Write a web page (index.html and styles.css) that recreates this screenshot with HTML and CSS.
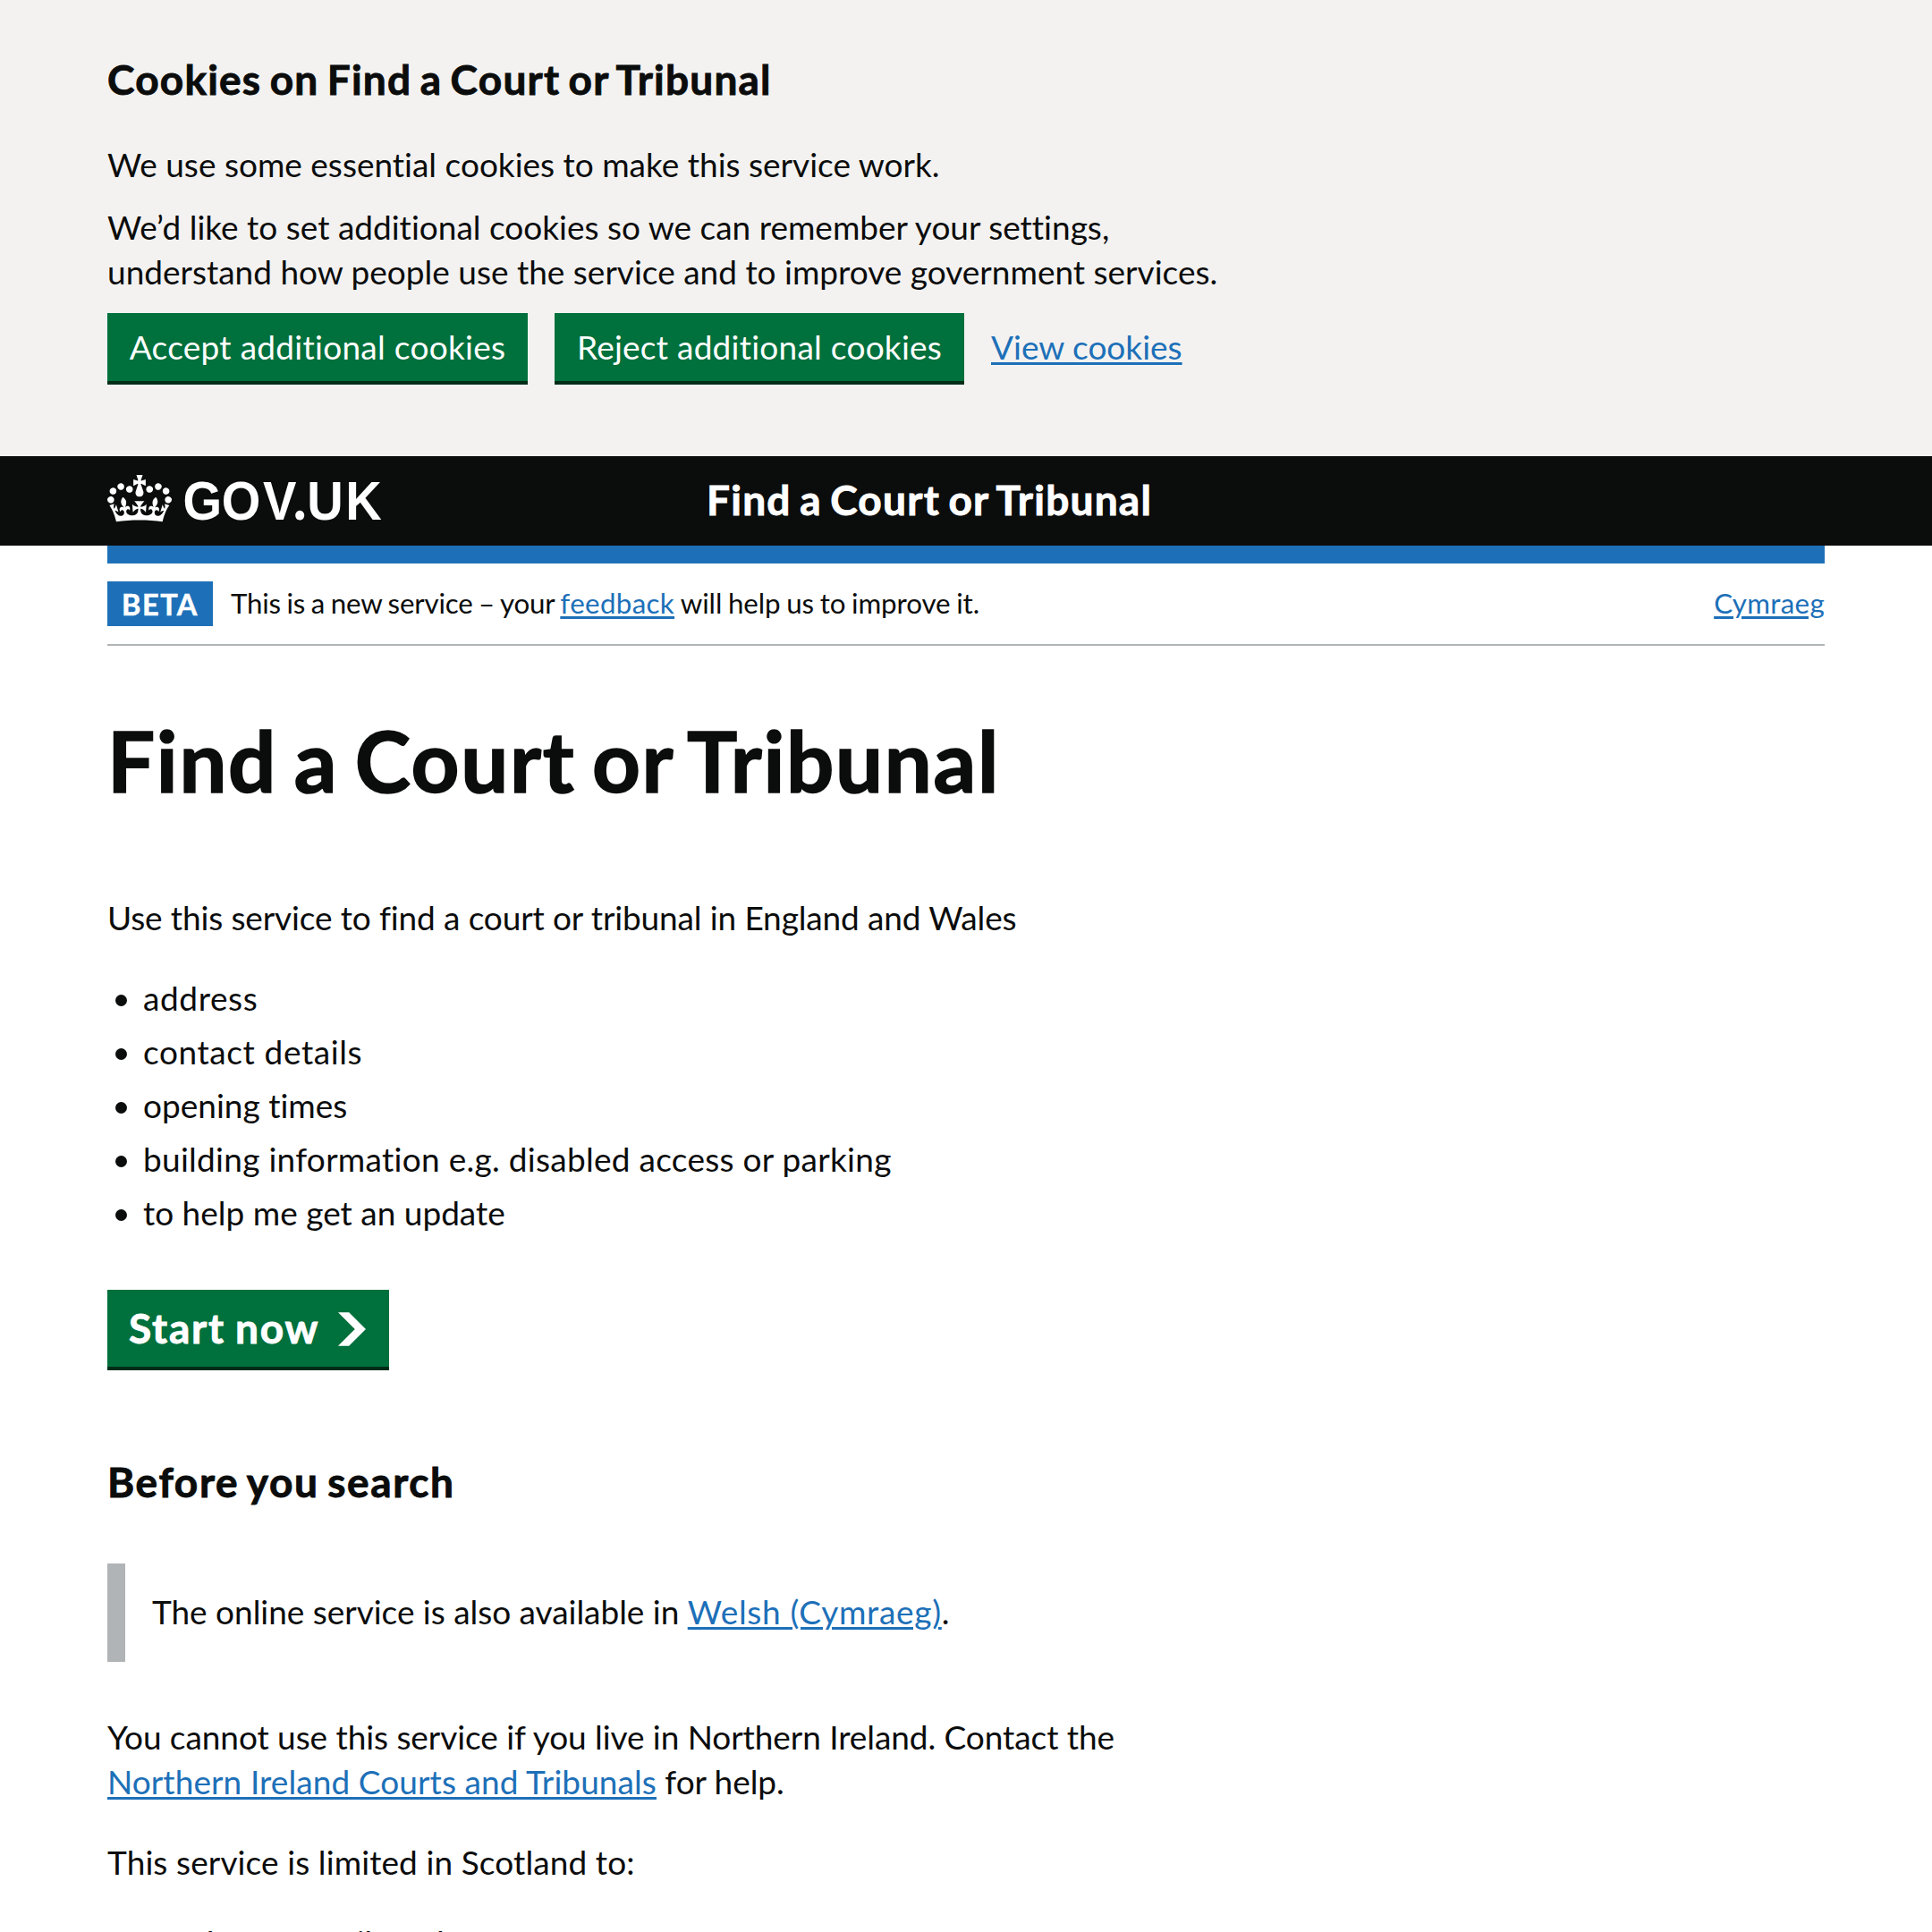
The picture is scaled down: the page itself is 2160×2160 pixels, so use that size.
FILE: index.html
```
<!DOCTYPE html>
<html lang="en">
<head>
<meta charset="utf-8">
<title>Find a Court or Tribunal</title>
<link rel="stylesheet" href="styles.css">
</head>
<body>
<section class="cookie-banner" aria-label="Cookies">
  <h2 class="cookie-title">Cookies on Find a Court or Tribunal</h2>
  <p class="cookie-intro">We use some essential cookies to make this service work.</p>
  <p class="cookie-detail">We’d like to set additional cookies so we can remember your settings,<br>understand how people use the service and to improve government services.</p>
  <div class="button-group">
    <button class="button button-accept" type="button">Accept additional cookies</button>
    <button class="button button-reject" type="button">Reject additional cookies</button>
    <a class="link cookie-link" href="#">View cookies</a>
  </div>
</section>
<header class="header">
  <a class="logo" href="#" aria-label="GOV.UK">
    <svg class="logo-mark" viewBox="0 0 310 53" width="310" height="53">
      <path transform="scale(.5455)" fill-rule="evenodd" d="M25 30.2c3.5 1.5 7.7-.2 9.1-3.7 1.5-3.6-.2-7.8-3.9-9.2-3.6-1.4-7.6.3-9.1 3.9-1.4 3.5.3 7.5 3.9 9zM9 39.5c3.6 1.5 7.8-.2 9.2-3.7 1.5-3.6-.2-7.8-3.9-9.1-3.6-1.5-7.6.2-9.1 3.8-1.4 3.5.3 7.5 3.8 9zM4.4 57.2c3.5 1.5 7.7-.2 9.1-3.8 1.5-3.6-.2-7.7-3.9-9.1-3.5-1.5-7.6.3-9.1 3.8-1.4 3.5.3 7.6 3.9 9.1zm38.3-21.4c3.5 1.5 7.7-.2 9.1-3.8 1.5-3.6-.2-7.7-3.9-9.1-3.6-1.5-7.6.3-9.1 3.8-1.3 3.6.4 7.7 3.9 9.1zm64.4-5.6c-3.6 1.5-7.8-.2-9.1-3.7-1.5-3.6.2-7.8 3.8-9.2 3.6-1.4 7.7.3 9.2 3.9 1.3 3.5-.4 7.5-3.9 9zm15.9 9.3c-3.6 1.5-7.7-.2-9.1-3.7-1.5-3.6.2-7.8 3.7-9.1 3.6-1.5 7.7.2 9.2 3.8 1.5 3.5-.3 7.5-3.8 9zm4.7 17.7c-3.6 1.5-7.8-.2-9.2-3.8-1.5-3.6.2-7.7 3.9-9.1 3.6-1.5 7.7.3 9.2 3.8 1.3 3.5-.4 7.6-3.9 9.1zM89.3 35.8c-3.6 1.5-7.8-.2-9.2-3.8-1.4-3.6.2-7.7 3.9-9.1 3.6-1.5 7.7.3 9.2 3.8 1.4 3.6-.3 7.7-3.9 9.1zM69.7 17.7l8.9 4.7V9.3l-8.9 2.8c-.2-.3-.5-.6-.9-.9L72.4 0H59.6l3.5 11.2c-.3.3-.6.5-.9.9l-8.8-2.8v13.1l8.8-4.7c.3.3.6.7.9.9l-5 15.4v.1c-.2.8-.4 1.6-.4 2.4 0 4.1 3.1 7.5 7 8.1h.2c.3 0 .7.1 1 .1.4 0 .7 0 1-.1h.2c4-.6 7.1-4.1 7.1-8.1 0-.8-.1-1.7-.4-2.4V34l-5.1-15.4c.4-.2.7-.6 1-.9zM66 92.8c16.9 0 32.8 1.1 47.1 3.2 4-16.9 8.9-26.7 14-33.5l-9.6-3.4c1 4.9 1.1 7.2 0 10.2-1.5-1.4-3-4.3-4.2-8.7L108.6 76c2.8-2 5-3.2 7.5-3.3-4.4 9.4-10 11.9-13.6 11.2-4.3-.8-6.3-4.6-5.6-7.9 1-4.7 5.7-5.9 8-.5 4.3-8.7-3-11.4-7.6-8.8 7.1-7.2 7.9-13.5 2.1-21.1-8 6.1-8.1 12.3-4.5 20.8-4.7-5.4-12.1-2.5-9.5 6.2 3.4-5.2 7.9-2 7.2 3.1-.6 4.3-6.4 7.8-13.5 7.2-10.3-.9-10.9-8-11.2-13.8 2.5-.5 7.1 1.8 11 7.3L80.2 60c-4.1 4.4-8 5.3-12.3 5.4 1.4-4.4 8-11.6 8-11.6H55.5s6.4 7.2 7.9 11.6c-4.2-.1-8-1-12.3-5.4l1.4 16.4c3.9-5.5 8.5-7.7 10.9-7.3-.3 5.8-.9 12.8-11.1 13.8-7.2.6-12.9-2.9-13.5-7.2-.7-5 3.8-8.3 7.1-3.1 2.7-8.7-4.6-11.6-9.4-6.2 3.7-8.5 3.6-14.7-4.6-20.8-5.8 7.6-5 13.9 2.2 21.1-4.7-2.6-11.9.1-7.7 8.8 2.3-5.5 7.1-4.2 8.1.5.7 3.3-1.3 7.1-5.7 7.9-3.5.7-9-1.8-13.5-11.2 2.5.1 4.7 1.3 7.5 3.3l-4.7-15.4c-1.2 4.4-2.7 7.2-4.3 8.7-1.1-3-.9-5.3 0-10.2l-9.5 3.4c5 6.9 9.9 16.7 14 33.5 14.8-2.1 30.8-3.2 47.7-3.2z"/>
      <text class="logo-text" transform="scale(.92 1)" x="91.9 138.8 189 226 242.7 289.5" y="50">GOV<tspan class="logo-dot">.</tspan>UK</text>
    </svg>
  </a>
  <a class="service-name" href="#">Find a Court or Tribunal</a>
</header>
<div class="page">
  <div class="phase-banner">
    <strong class="tag">BETA</strong>
    <span class="phase-text">This is a new service – your <a class="link feedback" href="#">feedback</a> <span class="phase-end">will help us to improve it.</span></span>
    <a class="link language" href="#">Cymraeg</a>
  </div>
  <main>
    <h1 class="title">Find a Court or Tribunal</h1>
    <p class="lead">Use this service to find a court or tribunal in England and Wales</p>
    <ul class="list">
      <li class="wide">address</li>
      <li class="wide">contact details</li>
      <li>opening times</li>
      <li class="wider-line">building information e.g. disabled access or parking</li>
      <li>to help me get an update</li>
    </ul>
    <a class="start" href="#">Start now
      <svg class="start-icon" viewBox="0 0 33 40" width="31" height="38"><path fill="currentColor" d="M0 0h13l20 20-20 20H0l20-20z"/></svg>
    </a>
    <h2 class="subtitle">Before you search</h2>
    <div class="inset">The online service is also available in <a class="link welsh" href="#">Welsh (Cymraeg)</a>.</div>
    <p class="eligibility">You cannot use this service if you live in Northern Ireland. Contact the<br><a class="link northern" href="#">Northern Ireland Courts and Tribunals</a> for help.</p>
    <p class="scotland">This service is limited in Scotland to:</p>
    <ul class="list">
      <li>employment tribunals</li>
    </ul>
  </main>
</div>
</body>
</html>
```
FILE: styles.css
```
* { box-sizing: border-box; }
html { height: 2160px; overflow: hidden; }
body {
  margin: 0;
  height: 2160px;
  overflow: hidden;
  background: #fff;
  color: #0b0c0c;
  font: 37px/50px Lato, "Open Sans", sans-serif;
  font-variant-ligatures: none;
  white-space: nowrap;
}
h1, h2, p, ul { margin: 0; padding: 0; }

.link {
  color: #1d70b8;
  text-decoration: underline;
  text-decoration-thickness: 3px;
  text-underline-offset: 3px;
}

.cookie-banner {
  height: 510px;
  padding: 59px 120px 0;
  background: #f3f2f1;
}
.cookie-title {
  margin-bottom: 40px;
  font-size: 46px;
  line-height: 60px;
  letter-spacing: 1.2px;
  word-spacing: -3px;
}
.cookie-title, .service-name, .start, .subtitle { -webkit-text-stroke: .9px currentColor; }
.cookie-intro { margin-bottom: 20px; }
.cookie-detail { margin-bottom: 21px; }
.button-group { display: flex; gap: 30px; }
.button {
  height: 80px;
  padding: 13px 0 17px;
  border: 0;
  border-bottom: 4px solid #002d18;
  background: #00703c;
  color: #fff;
  font: inherit;
  font-variant-ligatures: none;
  line-height: 50px;
  text-align: center;
}
.button-accept { width: 470px; letter-spacing: .28px; }
.button-reject { width: 458px; letter-spacing: .25px; }
.cookie-link { padding-top: 13px; }

.header {
  display: grid;
  grid-template-columns: 670px auto;
  height: 100px;
  padding: 0 120px;
  background: #0b0c0c;
  color: #fff;
}
.logo { padding-top: 21px; color: inherit; }
.logo-mark { display: block; overflow: visible; fill: #fff; }
.logo-text { font: 700 61px "Liberation Sans", Arial, sans-serif; }
.logo-dot { font-family: Lato, sans-serif; font-size: 66px; font-weight: 900; }
.service-name {
  padding-top: 19px;
  color: inherit;
  font-size: 46px;
  font-weight: 700;
  line-height: 60px;
  letter-spacing: 1.25px;
  word-spacing: -3px;
  text-decoration: none;
}

.page { margin: 0 120px; border-top: 20px solid #1d70b8; }
.phase-banner {
  display: flex;
  padding: 20px 0;
  border-bottom: 2px solid #b1b4b6;
  font-size: 31.3px;
  line-height: 40px;
}
.tag {
  width: 118px;
  height: 50px;
  margin-right: 20px;
  padding-top: 6px;
  background: #1d70b8;
  color: #fff;
  font-size: 32.5px;
  letter-spacing: 1.5px;
  text-align: center;
  -webkit-text-stroke: .5px currentColor;
}
.phase-text { padding-top: 4px; letter-spacing: -.2px; word-spacing: -1.2px; }
.feedback { letter-spacing: .35px; }
.phase-end { letter-spacing: -.1px; }
.language { margin-left: auto; padding-top: 4px; letter-spacing: .3px; }

.title {
  margin-top: 78px;
  font-size: 94px;
  line-height: 100px;
  letter-spacing: 1.7px;
  word-spacing: -6px;
  -webkit-text-stroke: 1.6px currentColor;
}
.lead { margin-top: 101px; letter-spacing: -.13px; }
.list {
  display: grid;
  gap: 10px;
  margin-top: 40px;
  padding-left: 40px;
  list-style: none;
}
.list li::before {
  content: "";
  float: left;
  width: 13px;
  height: 13px;
  margin: 21px 18px 0 -31px;
  border-radius: 50%;
  background: #0b0c0c;
}
.wide { letter-spacing: .6px; }
.wider-line { letter-spacing: .28px; }

.start {
  display: flex;
  align-items: flex-start;
  justify-content: space-between;
  width: 315px;
  height: 90px;
  margin-top: 61px;
  padding: 13px 26px 0 24px;
  border-bottom: 4px solid #002d18;
  background: #00703c;
  color: #fff;
  font-size: 46px;
  font-weight: 700;
  line-height: 60px;
  letter-spacing: 1.8px;
  word-spacing: -2px;
  text-decoration: none;
}
.start-icon { margin-top: 12px; }
.subtitle {
  margin-top: 95px;
  font-size: 46px;
  line-height: 60px;
  letter-spacing: 1.6px;
  word-spacing: -3px;
}
.inset {
  height: 110px;
  margin: 61px 0 59px;
  padding: 29px 0 0 30px;
  border-left: 20px solid #b1b4b6;
  letter-spacing: -.03px;
}
.welsh { letter-spacing: .7px; }
.eligibility { letter-spacing: -.07px; }
.northern { letter-spacing: .08px; }
.scotland { margin-top: 40px; letter-spacing: .1px; }
```
